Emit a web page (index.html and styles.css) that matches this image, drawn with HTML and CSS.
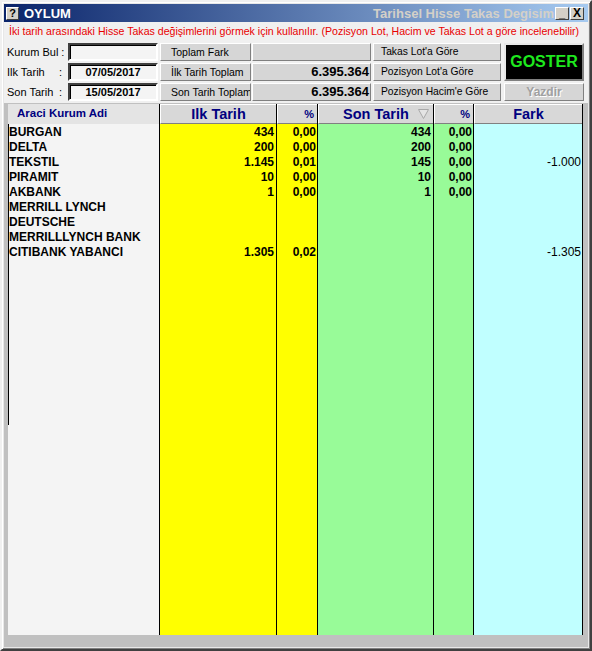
FILE: index.html
```html
<!DOCTYPE html>
<html lang="tr">
  <head>
    <meta charset="UTF-8" />
    <title>OYLUM - Tarihsel Hisse Takas Degisim</title>
    <link rel="stylesheet" href="styles.css">
  </head>
  <body>
    <div class="window">
      <div class="titlebar">
        <span class="title-icon">?</span>
        <span class="title-main">OYLUM</span>
        <span class="title-sub">Tarihsel Hisse Takas Degisim</span>
        <span class="tbtn">_</span>
        <span class="tbtn tbtn-close">X</span>
      </div>

      <div class="client">
        <div class="hint">
          İki tarih arasındaki Hisse Takas değişimlerini görmek için kullanılır. (Pozisyon Lot, Hacim ve Takas Lot a göre incelenebilir)
        </div>

        <div class="form">
          <label class="lbl"><span class="lbl-text">Kurum Bul</span><span class="colon">:</span></label>
          <div class="field"></div>
          <div class="btn">Toplam Fark</div>
          <div class="value"></div>
          <div class="btn btn-opt">Takas Lot'a Göre</div>
          <div class="goster">GOSTER</div>

          <label class="lbl"><span class="lbl-text">Ilk Tarih</span><span class="colon">:</span></label>
          <div class="field">07/05/2017</div>
          <div class="btn">İlk Tarih Toplam</div>
          <div class="value">6.395.364</div>
          <div class="btn btn-opt">Pozisyon Lot'a Göre</div>

          <label class="lbl"><span class="lbl-text">Son Tarih</span><span class="colon">:</span></label>
          <div class="field">15/05/2017</div>
          <div class="btn">Son Tarih Toplam</div>
          <div class="value">6.395.364</div>
          <div class="btn btn-opt">Pozisyon Hacim'e Göre</div>
          <div class="btn btn-print">Yazdir</div>
        </div>

        <div class="grid">
          <div class="cols">
            <div class="col col-name">
              <div class="head head-name">Araci Kurum Adi</div>
              <div class="name-cells">
                <div class="cell">BURGAN</div>
                <div class="cell">DELTA</div>
                <div class="cell">TEKSTIL</div>
                <div class="cell">PIRAMIT</div>
                <div class="cell">AKBANK</div>
                <div class="cell">MERRILL LYNCH</div>
                <div class="cell">DEUTSCHE</div>
                <div class="cell">MERRILLLYNCH BANK</div>
                <div class="cell">CITIBANK YABANCI</div>
                <div class="name-fill"></div>
              </div>
            </div>

            <div class="col col-ilk">
              <div class="head">Ilk Tarih</div>
              <div class="cell num">434</div>
              <div class="cell num">200</div>
              <div class="cell num">1.145</div>
              <div class="cell num">10</div>
              <div class="cell num">1</div>
              <div class="cell num"></div>
              <div class="cell num"></div>
              <div class="cell num"></div>
              <div class="cell num">1.305</div>
            </div>

            <div class="col col-pct1">
              <div class="head head-pct">%</div>
              <div class="cell num">0,00</div>
              <div class="cell num">0,00</div>
              <div class="cell num">0,01</div>
              <div class="cell num">0,00</div>
              <div class="cell num">0,00</div>
              <div class="cell num"></div>
              <div class="cell num"></div>
              <div class="cell num"></div>
              <div class="cell num">0,02</div>
            </div>

            <div class="col col-son">
              <div class="head head-sort">
                Son Tarih
                <svg class="sort-arrow" width="11" height="10" viewBox="0 0 11 10">
                  <polygon points="0.5,0.5 10.5,0.5 5.5,9.5" fill="#e4e4e4" stroke="#a8a8a8" stroke-width="1" />
                </svg>
              </div>
              <div class="cell num">434</div>
              <div class="cell num">200</div>
              <div class="cell num">145</div>
              <div class="cell num">10</div>
              <div class="cell num">1</div>
            </div>

            <div class="col col-pct2">
              <div class="head head-pct">%</div>
              <div class="cell num">0,00</div>
              <div class="cell num">0,00</div>
              <div class="cell num">0,00</div>
              <div class="cell num">0,00</div>
              <div class="cell num">0,00</div>
            </div>

            <div class="col col-fark">
              <div class="head">Fark</div>
              <div class="cell num plain"></div>
              <div class="cell num plain"></div>
              <div class="cell num plain">-1.000</div>
              <div class="cell num plain"></div>
              <div class="cell num plain"></div>
              <div class="cell num plain"></div>
              <div class="cell num plain"></div>
              <div class="cell num plain"></div>
              <div class="cell num plain">-1.305</div>
            </div>
          </div>
        </div>
      </div>
    </div>
  </body>
</html>
```

FILE: styles.css
```css
html,
body {
  margin: 0;
  padding: 0;
  background: #d4d0c8;
}
body {
  font-family: "Liberation Sans", Arial, sans-serif;
  font-size: 11px;
  color: #000;
}
.window {
  box-sizing: border-box;
  width: 592px;
  height: 651px;
  padding: 2px;
  background: #e8e8e8;
  border: 2px solid;
  border-color: #f0f0f0 #404040 #404040 #f0f0f0;
  box-shadow: inset 1px 1px 0 #fff, inset -1px -1px 0 #808080;
  display: flex;
  flex-direction: column;
}

/* title bar */
.titlebar {
  height: 18px;
  flex: none;
  display: flex;
  align-items: center;
  padding: 0 4px 0 2px;
  background: linear-gradient(to right, #0a246a, #a6caf0);
}
.title-icon {
  box-sizing: border-box;
  width: 13px;
  height: 13px;
  background: #d4d0c8;
  border: 1px solid;
  border-color: #fff #404040 #404040 #fff;
  font-weight: bold;
  font-size: 11px;
  line-height: 11px;
  text-align: center;
  color: #000;
}
.title-main {
  margin-left: 5px;
  color: #fff;
  font-weight: bold;
  font-size: 13px;
}
.title-sub {
  flex: 1;
  overflow: hidden;
  white-space: nowrap;
  text-align: right;
  color: #d4d0c8;
  font-weight: bold;
  font-size: 13px;
  direction: rtl;
}
.tbtn {
  box-sizing: border-box;
  width: 14px;
  height: 13px;
  margin-left: 1px;
  background: #d4d0c8;
  border: 1px solid;
  border-color: #fff #404040 #404040 #fff;
  font-weight: bold;
  font-size: 11px;
  line-height: 10px;
  text-align: center;
}
.tbtn-close {
  font-size: 12px;
  line-height: 11px;
}

/* client area */
.client {
  flex: 1;
  display: flex;
  flex-direction: column;
  background: #f0f0f0;
}
.hint {
  height: 21px;
  flex: none;
  line-height: 19px;
  padding-left: 5px;
  color: #e80000;
  font-size: 10.6px;
  white-space: nowrap;
  overflow: hidden;
}

/* form */
.form {
  flex: none;
  display: grid;
  grid-template-columns: 61px 92px 92px 121px 131px 80px;
  grid-template-rows: 18px 18px 18px;
  row-gap: 2px;
  padding-left: 3px;
}
.lbl {
  display: flex;
  align-items: center;
  font-size: 11px;
  white-space: nowrap;
}
.lbl-text {
  min-width: 49px;
}
.colon {
  margin-left: 3px;
}
.field {
  box-sizing: border-box;
  width: 90px;
  background: #f4f4f4;
  border: 2px solid;
  border-color: #404040 #fff #fff #404040;
  box-shadow: inset 1px 1px 0 #000;
  font-weight: bold;
  font-size: 11px;
  line-height: 14px;
  text-align: center;
}
.btn {
  box-sizing: border-box;
  width: 91px;
  padding-left: 10px;
  background: #d6d6d6;
  border: 1px solid;
  border-color: #fff #808080 #808080 #fff;
  font-size: 10.5px;
  line-height: 16px;
  white-space: nowrap;
  overflow: hidden;
}
.value {
  box-sizing: border-box;
  width: 119px;
  padding-right: 1px;
  background: #d6d6d6;
  border: 1px solid;
  border-color: #fff #808080 #808080 #fff;
  text-align: right;
  font-weight: bold;
  font-size: 13px;
  line-height: 16px;
}
.btn-opt {
  width: 128px;
  padding-left: 7px;
  font-size: 10.3px;
}
.goster {
  grid-column: 6;
  grid-row: 1 / span 2;
  box-sizing: border-box;
  width: 80px;
  background: #000;
  border: 2px solid;
  border-color: #e8e8e8 #808080 #808080 #e8e8e8;
  color: #1ee81e;
  font-weight: bold;
  font-size: 16px;
  display: flex;
  align-items: center;
  justify-content: center;
}
.btn-print {
  grid-column: 6;
  grid-row: 3;
  width: 80px;
  padding: 0;
  text-align: center;
  color: #a0a0a0;
  font-weight: bold;
  font-size: 12px;
  text-shadow: 1px 1px 0 #fff;
}

/* data grid */
.grid {
  flex: 1;
  margin-top: 2px;
  padding: 1px 0 12px 4px;
  background: #c0c0c0;
  display: flex;
}
.cols {
  display: flex;
  font-weight: bold;
  font-size: 12px;
}
.col {
  box-sizing: border-box;
  display: flex;
  flex-direction: column;
  border-left: 1px solid #000;
}
.col-name {
  width: 151px;
  border-left: none;
  background: #f4f4f4;
}
.col-ilk {
  width: 117px;
  background: #ffff00;
}
.col-pct1 {
  width: 41px;
  background: #ffff00;
}
.col-son {
  width: 116px;
  background: #98fb98;
}
.col-pct2 {
  width: 40px;
  background: #98fb98;
}
.col-fark {
  width: 110px;
  background: #c0ffff;
  border-right: 1px solid #000;
}
.head {
  position: relative;
  box-sizing: border-box;
  height: 20px;
  background: #d8d8d8;
  border-top: 1px solid #fff;
  border-left: 1px solid #fff;
  border-bottom: 1px solid #808080;
  color: #000080;
  font-size: 14.5px;
  line-height: 18px;
  text-align: center;
}
.head-name {
  background: #e4e4e4;
  border: none;
  text-align: left;
  padding-left: 9px;
  font-size: 11.5px;
  line-height: 19px;
}
.head-pct {
  text-align: right;
  padding-right: 3px;
  font-size: 11px;
}
.sort-arrow {
  position: absolute;
  right: 4px;
  top: 4px;
}
.name-cells {
  border-left: 1px solid #000;
}
.name-fill {
  height: 166px;
}
.cell {
  height: 15px;
  line-height: 16px;
  white-space: nowrap;
}
.num {
  text-align: right;
  padding-right: 2px;
}
.col-pct1 .num,
.col-pct2 .num {
  padding-right: 1px;
}
.plain {
  font-weight: normal;
  padding-right: 1px;
}
```
